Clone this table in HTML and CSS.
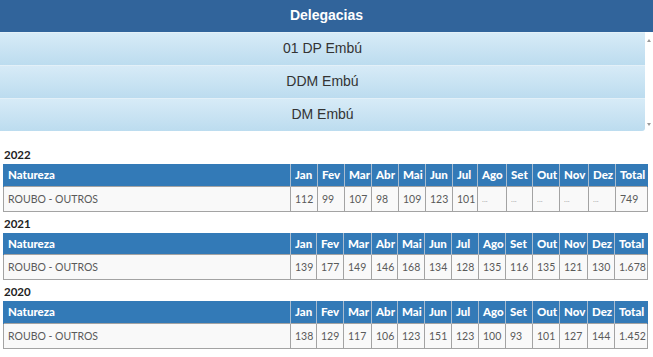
FILE: index.html
```html
<!DOCTYPE html>
<html lang="pt">
<head>
<meta charset="utf-8">
<title>Delegacias</title>
<link rel="stylesheet" href="styles.css">
</head>
<body>
<div class="panel">
  <div class="panel-title">Delegacias</div>
  <div class="list-wrap">
    <ul class="list">
      <li>01 DP Embú</li>
      <li>DDM Embú</li>
      <li>DM Embú</li>
    </ul>
    <div class="scroll"><span class="arrow up"></span><span class="arrow down"></span></div>
  </div>
</div>

<div class="years">
  <section class="year">
    <h3 class="year-label">2022</h3>
    <table class="stats">
      <colgroup><col><col class="c27"><col class="c27"><col class="c27"><col class="c27"><col class="c27"><col class="c27"><col class="c25"><col class="c29"><col class="c26"><col class="c27"><col class="c29"><col class="c27"><col class="c32"></colgroup>
      <tr class="head"><th>Natureza</th><th>Jan</th><th>Fev</th><th>Mar</th><th>Abr</th><th>Mai</th><th>Jun</th><th>Jul</th><th>Ago</th><th>Set</th><th>Out</th><th>Nov</th><th>Dez</th><th>Total</th></tr>
      <tr class="data"><td>ROUBO - OUTROS</td><td>112</td><td>99</td><td>107</td><td>98</td><td>109</td><td>123</td><td>101</td><td class="empty">...</td><td class="empty">...</td><td class="empty">...</td><td class="empty">...</td><td class="empty">...</td><td>749</td></tr>
    </table>
  </section>
  <section class="year">
    <h3 class="year-label">2021</h3>
    <table class="stats">
      <colgroup><col><col class="c26"><col class="c27"><col class="c28"><col class="c26"><col class="c27"><col class="c27"><col class="c27"><col class="c27"><col class="c27"><col class="c27"><col class="c28"><col class="c27"><col class="c33"></colgroup>
      <tr class="head"><th>Natureza</th><th>Jan</th><th>Fev</th><th>Mar</th><th>Abr</th><th>Mai</th><th>Jun</th><th>Jul</th><th>Ago</th><th>Set</th><th>Out</th><th>Nov</th><th>Dez</th><th>Total</th></tr>
      <tr class="data"><td>ROUBO - OUTROS</td><td>139</td><td>177</td><td>149</td><td>146</td><td>168</td><td>134</td><td>128</td><td>135</td><td>116</td><td>135</td><td>121</td><td>130</td><td>1.678</td></tr>
    </table>
  </section>
  <section class="year">
    <h3 class="year-label">2020</h3>
    <table class="stats">
      <colgroup><col><col class="c26"><col class="c27"><col class="c28"><col class="c26"><col class="c27"><col class="c27"><col class="c27"><col class="c27"><col class="c27"><col class="c27"><col class="c28"><col class="c27"><col class="c33"></colgroup>
      <tr class="head"><th>Natureza</th><th>Jan</th><th>Fev</th><th>Mar</th><th>Abr</th><th>Mai</th><th>Jun</th><th>Jul</th><th>Ago</th><th>Set</th><th>Out</th><th>Nov</th><th>Dez</th><th>Total</th></tr>
      <tr class="data"><td>ROUBO - OUTROS</td><td>138</td><td>129</td><td>117</td><td>106</td><td>123</td><td>151</td><td>123</td><td>100</td><td>93</td><td>101</td><td>127</td><td>144</td><td>1.452</td></tr>
    </table>
  </section>
</div>
</body>
</html>
```
FILE: styles.css
```css
* { box-sizing: border-box; }
html, body { margin: 0; padding: 0; background: #fff; }
body { font-family: "Liberation Sans", Arial, sans-serif; }

.panel-title {
  height: 32px;
  background: #31649b;
  color: #fff;
  font-weight: bold;
  font-size: 14px;
  line-height: 31px;
  text-align: center;
}

.list-wrap { display: flex; }
.list {
  list-style: none;
  margin: 0;
  padding: 0;
  flex: 1;
  border-bottom-right-radius: 3px;
  overflow: hidden;
}
.list li {
  height: 33px;
  line-height: 31px;
  text-align: center;
  font-size: 14px;
  color: #333;
  background: linear-gradient(#d7ebf7, #bcdcef);
  border-top: 1px solid #e3f0f8;
}
.scroll {
  width: 8px;
  display: flex;
  flex-direction: column;
  justify-content: space-between;
  align-items: center;
  padding: 7px 0 5px;
}
.arrow { width: 0; height: 0; border-left: 2px solid transparent; border-right: 2px solid transparent; }
.arrow.up { border-bottom: 3px solid #9a9a9a; }
.arrow.down { border-top: 3px solid #9a9a9a; }

.years { padding: 5px 5px 0 3px; font-family: Lato, "Liberation Sans", sans-serif; }
.year-label {
  margin: 13px 0 3px 1px;
  font-size: 11.5px;
  line-height: 12px;
  font-weight: bold;
  color: #222;
}
.year:not(:first-child) .year-label { margin-top: 6px; }

.stats {
  width: 645px;
  border-collapse: collapse;
  table-layout: fixed;
  font-size: 11.5px;
}
.c25 { width: 25px; }
.c26 { width: 26px; }
.c27 { width: 27px; }
.c28 { width: 28px; }
.c29 { width: 29px; }
.c32 { width: 32px; }
.c33 { width: 33px; }

.stats th {
  height: 22px;
  background: #337ab7;
  color: #fff;
  font-weight: 900;
  text-align: left;
  padding: 0 3px 0 4px;
  border-left: 1px solid #a9bccf;
  border-right: 1px solid #a9bccf;
  white-space: nowrap;
}
.stats th:first-child { border-left-color: #337ab7; }
.stats th:last-child { border-right-color: #337ab7; }
.stats td {
  height: 25px;
  background: #f9f9f9;
  color: #5a5a5a;
  font-size: 10.5px;
  padding: 0 4px;
  border: 1px solid #a3a3a3;
  white-space: nowrap;
}
.stats td.empty { color: #aaa; font-size: 8px; }
```
